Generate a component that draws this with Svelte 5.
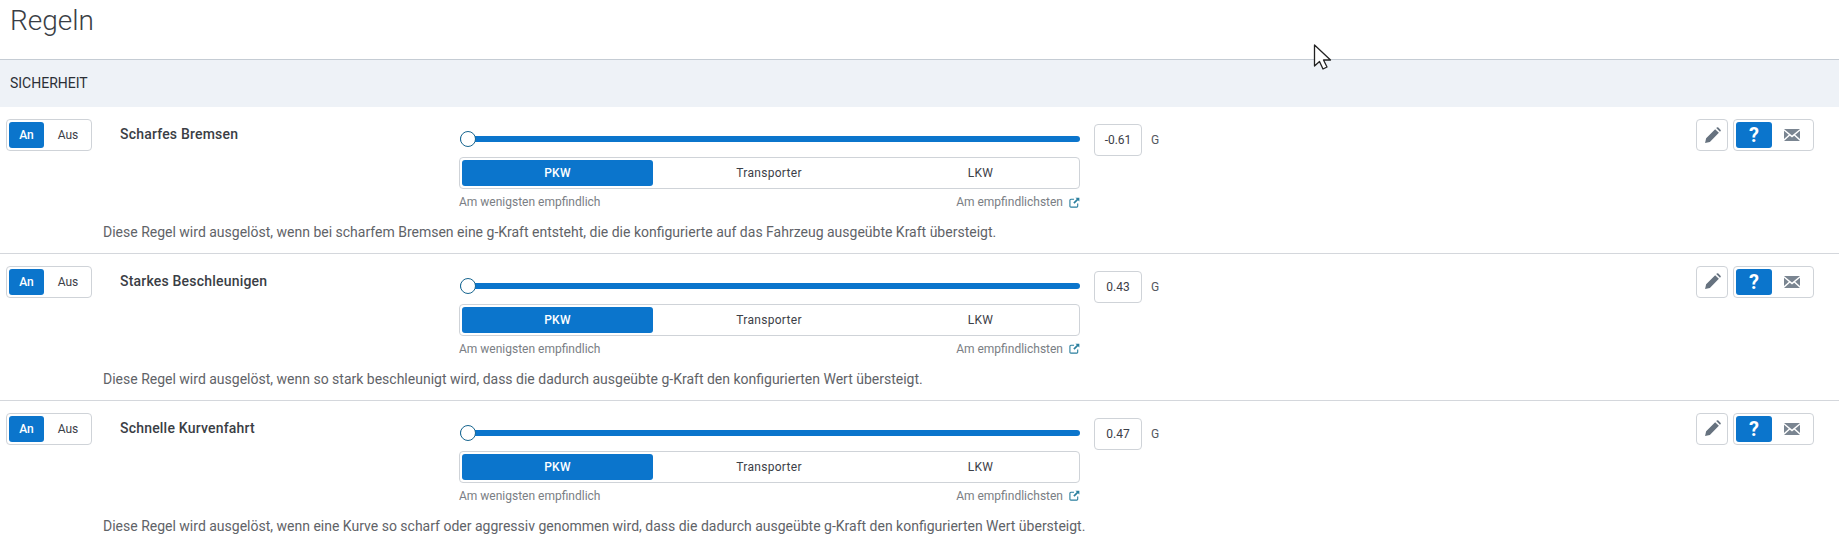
<script lang="ts">
const rules = [
	{ name: 'Scharfes Bremsen', value: '-0.61', text: 'Diese Regel wird ausgelöst, wenn bei scharfem Bremsen eine g-Kraft entsteht, die die konfigurierte auf das Fahrzeug ausgeübte Kraft übersteigt.' },
	{ name: 'Starkes Beschleunigen', value: '0.43', text: 'Diese Regel wird ausgelöst, wenn so stark beschleunigt wird, dass die dadurch ausgeübte g-Kraft den konfigurierten Wert übersteigt.' },
	{ name: 'Schnelle Kurvenfahrt', value: '0.47', text: 'Diese Regel wird ausgelöst, wenn eine Kurve so scharf oder aggressiv genommen wird, dass die dadurch ausgeübte g-Kraft den konfigurierten Wert übersteigt.' }
];
</script>

<div class="page">
	<h1>Regeln</h1>
	<div class="section">SICHERHEIT</div>

	{#each rules as rule}
		<div class="rule">
			<div class="top">
				<div class="group toggle">
					<span class="opt active">An</span>
					<span class="opt">Aus</span>
				</div>
				<div class="name">{rule.name}</div>
				<div class="config">
					<div class="slider">
						<span class="thumb"></span>
					</div>
					<div class="group seg">
						<span class="opt active">PKW</span>
						<span class="opt">Transporter</span>
						<span class="opt">LKW</span>
					</div>
					<div class="scale">
						<span>Am wenigsten empfindlich</span>
						<span class="most">
							Am empfindlichsten
							<svg width="11" height="11" viewBox="0 0 12 12" fill="none">
								<path d="M9.500 7v3a1 1 0 0 1-1 1H2a1 1 0 0 1-1-1V3.500a1 1 0 0 1 1-1h3.500" stroke="#2a7f9e" stroke-width="1.200" />
								<path d="M7 .7h4.300V5L9.800 3.500 6 7.300 4.700 6 8.500 2.200z" fill="#2a7f9e" />
							</svg>
						</span>
					</div>
				</div>
				<div class="value">{rule.value}</div>
				<div class="unit">G</div>
				<div class="actions">
					<button class="edit" aria-label="Bearbeiten">
						<svg width="17" height="17" viewBox="0 0 16 16">
							<path d="M1 15l1-4.500L10.500 2l3.500 3.500L5.500 14zM11.500 1l.6-.5a1 1 0 0 1 1.400 0l2 2a1 1 0 0 1 0 1.400l-.5.6z" fill="#66727f" />
						</svg>
					</button>
					<div class="group icons">
						<span class="opt active help">?</span>
						<span class="opt">
							<svg width="16" height="12" viewBox="0 0 16 12">
								<path d="M0 0h16L8 6.500zM0 1.800V10l4.800-4.200zM16 1.800V10l-4.800-4.200zM0 12l5.800-5.200L8 8.500l2.200-1.700L16 12z" fill="#7a8591" />
							</svg>
						</span>
					</div>
				</div>
			</div>
			<p class="desc">{rule.text}</p>
		</div>
	{/each}

	<svg class="cursor" width="20" height="28" viewBox="0 0 20 28">
		<path d="M1.500 1v21l5-4.500 3.500 7.500 4-2-3.500-7h7z" fill="#fff" stroke="#222" stroke-width="1.300" stroke-linejoin="round" />
	</svg>
</div>

<style>
	:global(body) {
		margin: 0;
		background: #fff;
	}

	.page {
		position: relative;
		width: 1839px;
		height: 542px;
		overflow: hidden;
		font-family: Roboto, "Liberation Sans", sans-serif;
		color: #2b2f36;
	}

	h1 {
		margin: 0;
		height: 59px;
		box-sizing: border-box;
		padding: 2px 0 0 10px;
		font-size: 28px;
		line-height: 38px;
		font-weight: 300;
		color: #3a3e45;
	}

	.section {
		height: 48px;
		box-sizing: border-box;
		padding-left: 10px;
		line-height: 46px;
		font-size: 14px;
		font-weight: 400;
		background: #eef2f7;
		border-top: 1px solid #c5ccd4;
	}

	.rule {
		height: 146.800px;
		box-sizing: border-box;
		border-bottom: 1px solid #d4d7dc;
	}

	.top {
		display: flex;
		align-items: flex-start;
		padding: 12px 25px 0 6px;
		height: 103px;
		box-sizing: border-box;
	}

	.group {
		display: flex;
		box-sizing: border-box;
		border: 1px solid #cfd3d8;
		border-radius: 4px;
		padding: 2px;
		background: #fff;
	}

	.opt {
		display: flex;
		align-items: center;
		justify-content: center;
		border-radius: 3px;
		font-size: 12px;
		color: #3c4048;
	}

	.opt.active {
		background: #0b75cc;
		color: #fff;
		font-weight: 500;
	}

	.toggle {
		width: 86px;
		height: 32px;
		flex: none;
	}

	.toggle .opt {
		width: 35px;
	}

	.toggle .opt + .opt {
		flex: 1;
		padding-left: 3px;
	}

	.name {
		width: 367px;
		flex: none;
		padding: 4px 0 0 28px;
		box-sizing: border-box;
		font-size: 14px;
		line-height: 22px;
		font-weight: 500;
		letter-spacing: 0.2px;
		color: #3a3e45;
	}

	.config {
		width: 621px;
		flex: none;
		padding-top: 4px;
	}

	.slider {
		position: relative;
		height: 6px;
		margin: 13px 0 15px 1px;
		background: #0b75cc;
		border-radius: 3px;
	}

	.thumb {
		position: absolute;
		left: 0;
		top: -5px;
		width: 16px;
		height: 16px;
		box-sizing: border-box;
		background: #fff;
		border: 1.500px solid #17658f;
		border-radius: 50%;
	}

	.seg {
		height: 32px;
	}

	.seg .opt {
		width: 191px;
		letter-spacing: 0.3px;
	}

	.seg .opt:nth-child(2) {
		width: 232px;
	}

	.seg .opt:nth-child(3) {
		width: 191px;
	}

	.scale {
		display: flex;
		justify-content: space-between;
		margin-top: 5px;
		font-size: 12px;
		line-height: 16px;
		color: #7a7e84;
	}

	.most {
		display: flex;
		align-items: center;
		gap: 6px;
	}

	.value {
		width: 48px;
		height: 32px;
		flex: none;
		margin: 5px 0 0 14px;
		box-sizing: border-box;
		border: 1px solid #cfd3d8;
		border-radius: 4px;
		font-size: 12px;
		line-height: 30px;
		text-align: center;
		color: #3c4048;
	}

	.unit {
		margin: 5px 0 0 9px;
		font-size: 12px;
		line-height: 32px;
		color: #55595f;
	}

	.actions {
		display: flex;
		gap: 5px;
		margin-left: auto;
	}

	.edit {
		width: 32px;
		height: 32px;
		padding: 0;
		display: flex;
		align-items: center;
		justify-content: center;
		background: #fff;
		border: 1px solid #cfd3d8;
		border-radius: 4px;
	}

	.icons {
		width: 81px;
		height: 32px;
	}

	.icons .opt {
		flex: 1;
	}

	.icons .help {
		flex: none;
		width: 36px;
		font-size: 20px;
		font-weight: 700;
	}

	.desc {
		margin: 0;
		padding: 12px 0 0 103px;
		font-size: 14px;
		line-height: 20px;
		color: #5f6368;
	}

	.cursor {
		position: absolute;
		left: 1313px;
		top: 44px;
	}
</style>
